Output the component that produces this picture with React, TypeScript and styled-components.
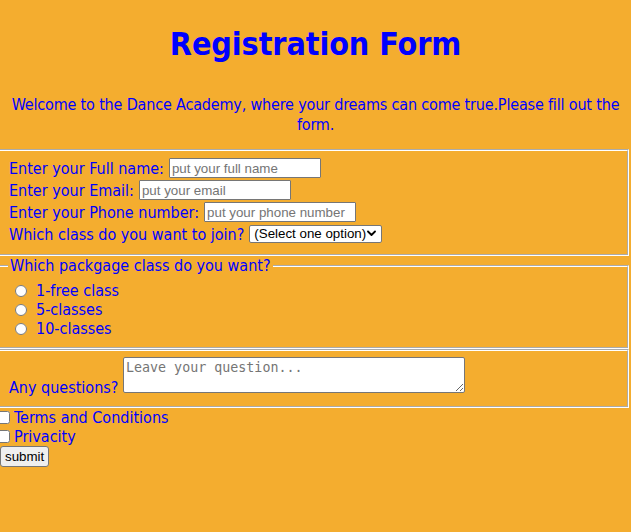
import styled, { createGlobalStyle } from 'styled-components';

const GlobalStyle = createGlobalStyle`
  html, body {
    margin: 0;
    background: #f4ad2f;
  }
  body {
    font-family: "DejaVu Sans Condensed", "DejaVu Sans", sans-serif;
    font-stretch: condensed;
    font-size: 16px;
    color: #0000ff;
    overflow: hidden;
  }
`;

const Page = styled.div`
  min-height: 532px;
`;

const Title = styled.h1`
  margin: 25px 0 0;
  font-size: 32px;
  line-height: 38px;
  font-weight: bold;
  text-align: center;
  letter-spacing: -0.1px;
`;

const Intro = styled.p`
  margin: 32px 0 14px;
  line-height: 20px;
  text-align: center;
  letter-spacing: -0.17px;
`;

const Group = styled.fieldset`
  margin: 0 2px 0 -6px;
  padding: 6px 12px 9px 13px;
  border: 2px groove #ffffff;
  min-width: 0;
`;

const Legend = styled.legend`
  margin-left: -1px;
  padding: 0 2px;
  line-height: 19px;
`;

const Field = styled.div`
  display: flex;
  align-items: center;
  gap: 5px;
  height: 22px;
`;

const TextInput = styled.input`
  box-sizing: border-box;
  width: 152px;
  height: 20px;
  padding: 1px 2px;
  border: 1px solid #767676;
  border-radius: 1px;
  background: #fff;
  font-family: "Liberation Sans", Arial, sans-serif;
  font-size: 13.33px;
  color: #000;

  &::placeholder {
    color: #757575;
  }
`;

const SelectWrap = styled.span`
  position: relative;
  display: inline-flex;
`;

const Select = styled.select`
  appearance: none;
  box-sizing: border-box;
  width: 133px;
  height: 18px;
  margin: 0;
  padding: 0 14px 0 4px;
  border: 1px solid #767676;
  border-radius: 2px;
  background: #fff;
  font-family: "Liberation Sans", Arial, sans-serif;
  font-size: 13.33px;
  line-height: 16px;
  color: #000;
`;

const Chevron = styled.svg`
  position: absolute;
  right: 6px;
  top: 5px;
  width: 9px;
  height: 7px;
  pointer-events: none;
`;

const Choice = styled.label`
  display: flex;
  align-items: center;
  height: 19px;
`;

const Radio = styled.input`
  width: 12px;
  height: 12px;
  margin: 0 9px 0 6px;
`;

const QuestionRow = styled.div`
  line-height: 19px;
`;

const Question = styled.textarea`
  box-sizing: border-box;
  width: 342px;
  height: 36px;
  margin: 0;
  padding: 2px;
  border: 1px solid #767676;
  border-radius: 2px;
  font-family: "DejaVu Sans Mono", "Liberation Mono", monospace;
  font-size: 13.33px;
  vertical-align: baseline;

  &::placeholder {
    color: #757575;
  }
`;

const Agree = styled.label`
  display: flex;
  align-items: center;
  height: 19px;
`;

const Checkbox = styled.input`
  width: 13px;
  height: 13px;
  margin: 0 4px 0 -3px;
`;

const SubmitButton = styled.button`
  display: block;
  box-sizing: border-box;
  height: 21px;
  margin: 0;
  padding: 1px 4px;
  border: 1px solid #767676;
  border-radius: 3px;
  background: #efefef;
  font-family: "Liberation Sans", Arial, sans-serif;
  font-size: 13.33px;
  color: #000;
`;

export default function App() {
  return (
    <Page>
      <GlobalStyle />
      <Title>Registration Form</Title>
      <Intro>
        Welcome to the Dance Academy, where your dreams can come true.Please fill out the form.
      </Intro>
      <form onSubmit={(e) => e.preventDefault()}>
        <Group>
          <Field>
            <span>Enter your Full name:</span>
            <TextInput type="text" placeholder="put your full name" />
          </Field>
          <Field>
            <span>Enter your Email:</span>
            <TextInput type="email" placeholder="put your email" />
          </Field>
          <Field>
            <span>Enter your Phone number:</span>
            <TextInput type="tel" placeholder="put your phone number" />
          </Field>
          <Field>
            <span>Which class do you want to join?</span>
            <SelectWrap>
              <Select defaultValue="">
                <option value="">(Select one option)</option>
                <option value="ballet">Ballet</option>
                <option value="hiphop">Hip hop</option>
                <option value="salsa">Salsa</option>
              </Select>
              <Chevron viewBox="0 0 9 7">
                <path d="M1 1.5 L4.5 5 L8 1.5" fill="none" stroke="#000" strokeWidth="1.8" strokeLinecap="round" strokeLinejoin="round" />
              </Chevron>
            </SelectWrap>
          </Field>
        </Group>

        <Group>
          <Legend>Which packgage class do you want?</Legend>
          <Choice>
            <Radio type="radio" name="package" value="1" />
            1-free class
          </Choice>
          <Choice>
            <Radio type="radio" name="package" value="5" />
            5-classes
          </Choice>
          <Choice>
            <Radio type="radio" name="package" value="10" />
            10-classes
          </Choice>
        </Group>

        <Group>
          <QuestionRow>
            Any questions? <Question placeholder="Leave your question..." />
          </QuestionRow>
        </Group>

        <Agree>
          <Checkbox type="checkbox" />
          Terms and Conditions
        </Agree>
        <Agree>
          <Checkbox type="checkbox" />
          Privacity
        </Agree>
        <SubmitButton type="submit">submit</SubmitButton>
      </form>
    </Page>
  );
}
